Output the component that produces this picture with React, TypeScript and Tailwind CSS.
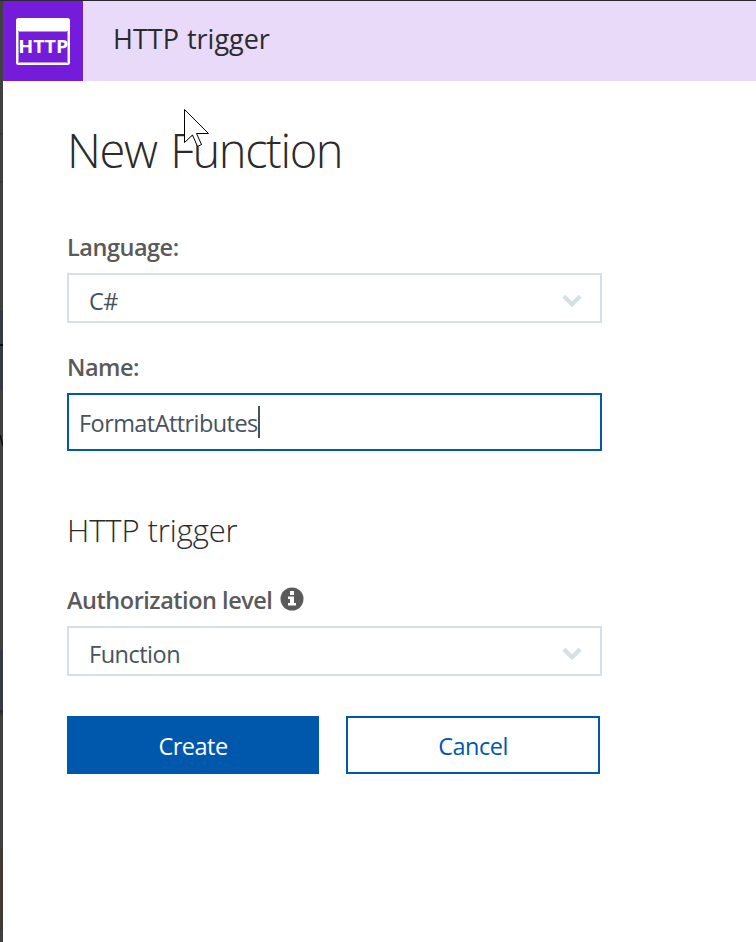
import type { ReactNode } from "react";

function HttpIcon() {
  return (
    <div className="flex h-20 w-20 shrink-0 items-center justify-center bg-[#741cd9]">
      <svg width="80" height="80" viewBox="0 0 80 80">
        <path
          fillRule="evenodd"
          fill="#fff"
          d="M15.5 17h49a2.5 2.5 0 0 1 2.5 2.5v42a2.5 2.5 0 0 1-2.5 2.5h-49a2.5 2.5 0 0 1-2.5-2.5v-42A2.5 2.5 0 0 1 15.5 17ZM15 30v32h50V30Z"
        />
        <path fill="none" stroke="#b98dec" d="M15.5 30.5h49v31h-49Z" />
        <text
          x="15.2"
          y="52.3"
          fill="#fff"
          textLength="50"
          lengthAdjust="spacingAndGlyphs"
          className="font-['Open_Sans',sans-serif] text-[18.5px] font-bold"
        >
          HTTP
        </text>
      </svg>
    </div>
  );
}

function Label({ children, className = "" }: { children: ReactNode; className?: string }) {
  return (
    <div
      className={`flex h-8 items-center text-[23.5px] leading-8 font-semibold tracking-[-0.48px] text-[#5a5a5a] ${className}`}
    >
      {children}
    </div>
  );
}

function SelectBox({ value }: { value: string }) {
  return (
    <div className="flex h-[50px] w-[535px] items-center justify-between border-2 border-[#d6e0e4] pr-[18px] pl-5 text-[#47525d]">
      <span className="pt-1.5 text-[23.5px] leading-8 tracking-[-0.5px]">{value}</span>
      <svg width="20" height="14" viewBox="0 0 20 14" className="mt-1.5">
        <path d="M1.8 2.2 10 10.2 18.2 2.2" fill="none" stroke="#d6e0e4" strokeWidth="4.2" />
      </svg>
    </div>
  );
}

function InfoIcon() {
  return (
    <svg width="24" height="24" viewBox="0 0 24 24" className="-mt-0.5 ml-[7.5px]">
      <circle cx="12" cy="12" r="11.5" fill="#5a5a5a" />
      <path fill="#fff" d="M10 4h4v4h-4ZM8 9.5h6V16h2v2.5H8V16h2v-4H8Z" />
    </svg>
  );
}

function Cursor() {
  return (
    <svg width="27" height="40" viewBox="0 0 27 40" className="absolute top-[108px] left-[183px]">
      <path
        d="M1.5 1.5V34.5L9.5 27 14.5 38.5 18.5 36.5 13.5 25.5H25.5Z"
        fill="#fff"
        stroke="#000"
        strokeWidth="1"
      />
    </svg>
  );
}

function BackdropStrip() {
  return (
    <div className="flex w-[3px] shrink-0 flex-col bg-[#404040]">
      <div className="h-[132px]" />
      <div className="h-0.5 bg-[#363636]" />
      <div className="h-[46px]" />
      <div className="h-0.5 bg-[#363636]" />
      <div className="h-[128px]" />
      <div className="h-[33px] bg-[#353a44]" />
      <div className="h-0.5 bg-[#0c0c0e]" />
      <div className="h-[44px] bg-[#353a44]" />
      <div className="h-[45px]" />
      <svg width="3" height="12" viewBox="0 0 3 12">
        <path d="M0 0 3 11" stroke="#0c0c0e" strokeWidth="1.5" />
      </svg>
      <div className="h-[203px]" />
      <div className="h-[60px] bg-[#353a44]" />
      <div className="h-2 bg-gradient-to-b from-[#2a2a2a] to-[#404040]" />
      <div className="h-[130px]" />
      <div className="h-[82px] bg-[#423a37]" />
    </div>
  );
}

export default function App() {
  return (
    <div className="relative flex h-[942px] w-[756px] flex-col overflow-hidden bg-white font-['Open_Sans','Noto_Sans',sans-serif]">
      <div className="h-px shrink-0 bg-[#2a2530]" />
      <div className="flex min-h-0 flex-1">
        <BackdropStrip />
        <div className="flex flex-1 flex-col">
          <header className="flex h-20 bg-[#e9dafa]">
            <HttpIcon />
            <span className="mt-[18px] ml-[30px] text-[27px] leading-10 [word-spacing:1px] text-[#2b2b2b]">
              HTTP trigger
            </span>
          </header>
          <main className="flex flex-col items-start pl-16">
            <h1 className="mt-[37px] text-[47px] leading-[64px] font-light tracking-[-1.4px] [word-spacing:3px] text-[#2b2b2b]">
              New Function
            </h1>
            <Label className="mt-[49px]">Language:</Label>
            <div className="mt-[10px]">
              <SelectBox value="C#" />
            </div>
            <Label className="mt-[28px]">Name:</Label>
            <div className="mt-[10px] flex h-[58px] w-[535px] items-center border-2 border-[#0058ad] pl-[10px] text-[#47525d]">
              <span className="pt-0.5 text-[23.5px] leading-8 tracking-[-0.57px]">FormatAttributes</span>
              <div className="h-8 w-0.5 bg-[#47525d]" />
            </div>
            <h2 className="mt-[57px] text-[31px] leading-[44px] font-light tracking-[-0.1px] text-[#2b2b2b]">
              HTTP trigger
            </h2>
            <Label className="mt-[32px]">
              Authorization level
              <InfoIcon />
            </Label>
            <div className="mt-[10px]">
              <SelectBox value="Function" />
            </div>
            <div className="mt-10 flex gap-[27px] text-[23.5px] tracking-[-0.5px]">
              <button className="h-[58px] w-[252px] bg-[#0058ad] pt-1 text-white">Create</button>
              <button className="h-[58px] w-[254px] border-2 border-[#0058ad] pt-1 text-[#0058ad]">Cancel</button>
            </div>
          </main>
        </div>
      </div>
      <Cursor />
    </div>
  );
}
